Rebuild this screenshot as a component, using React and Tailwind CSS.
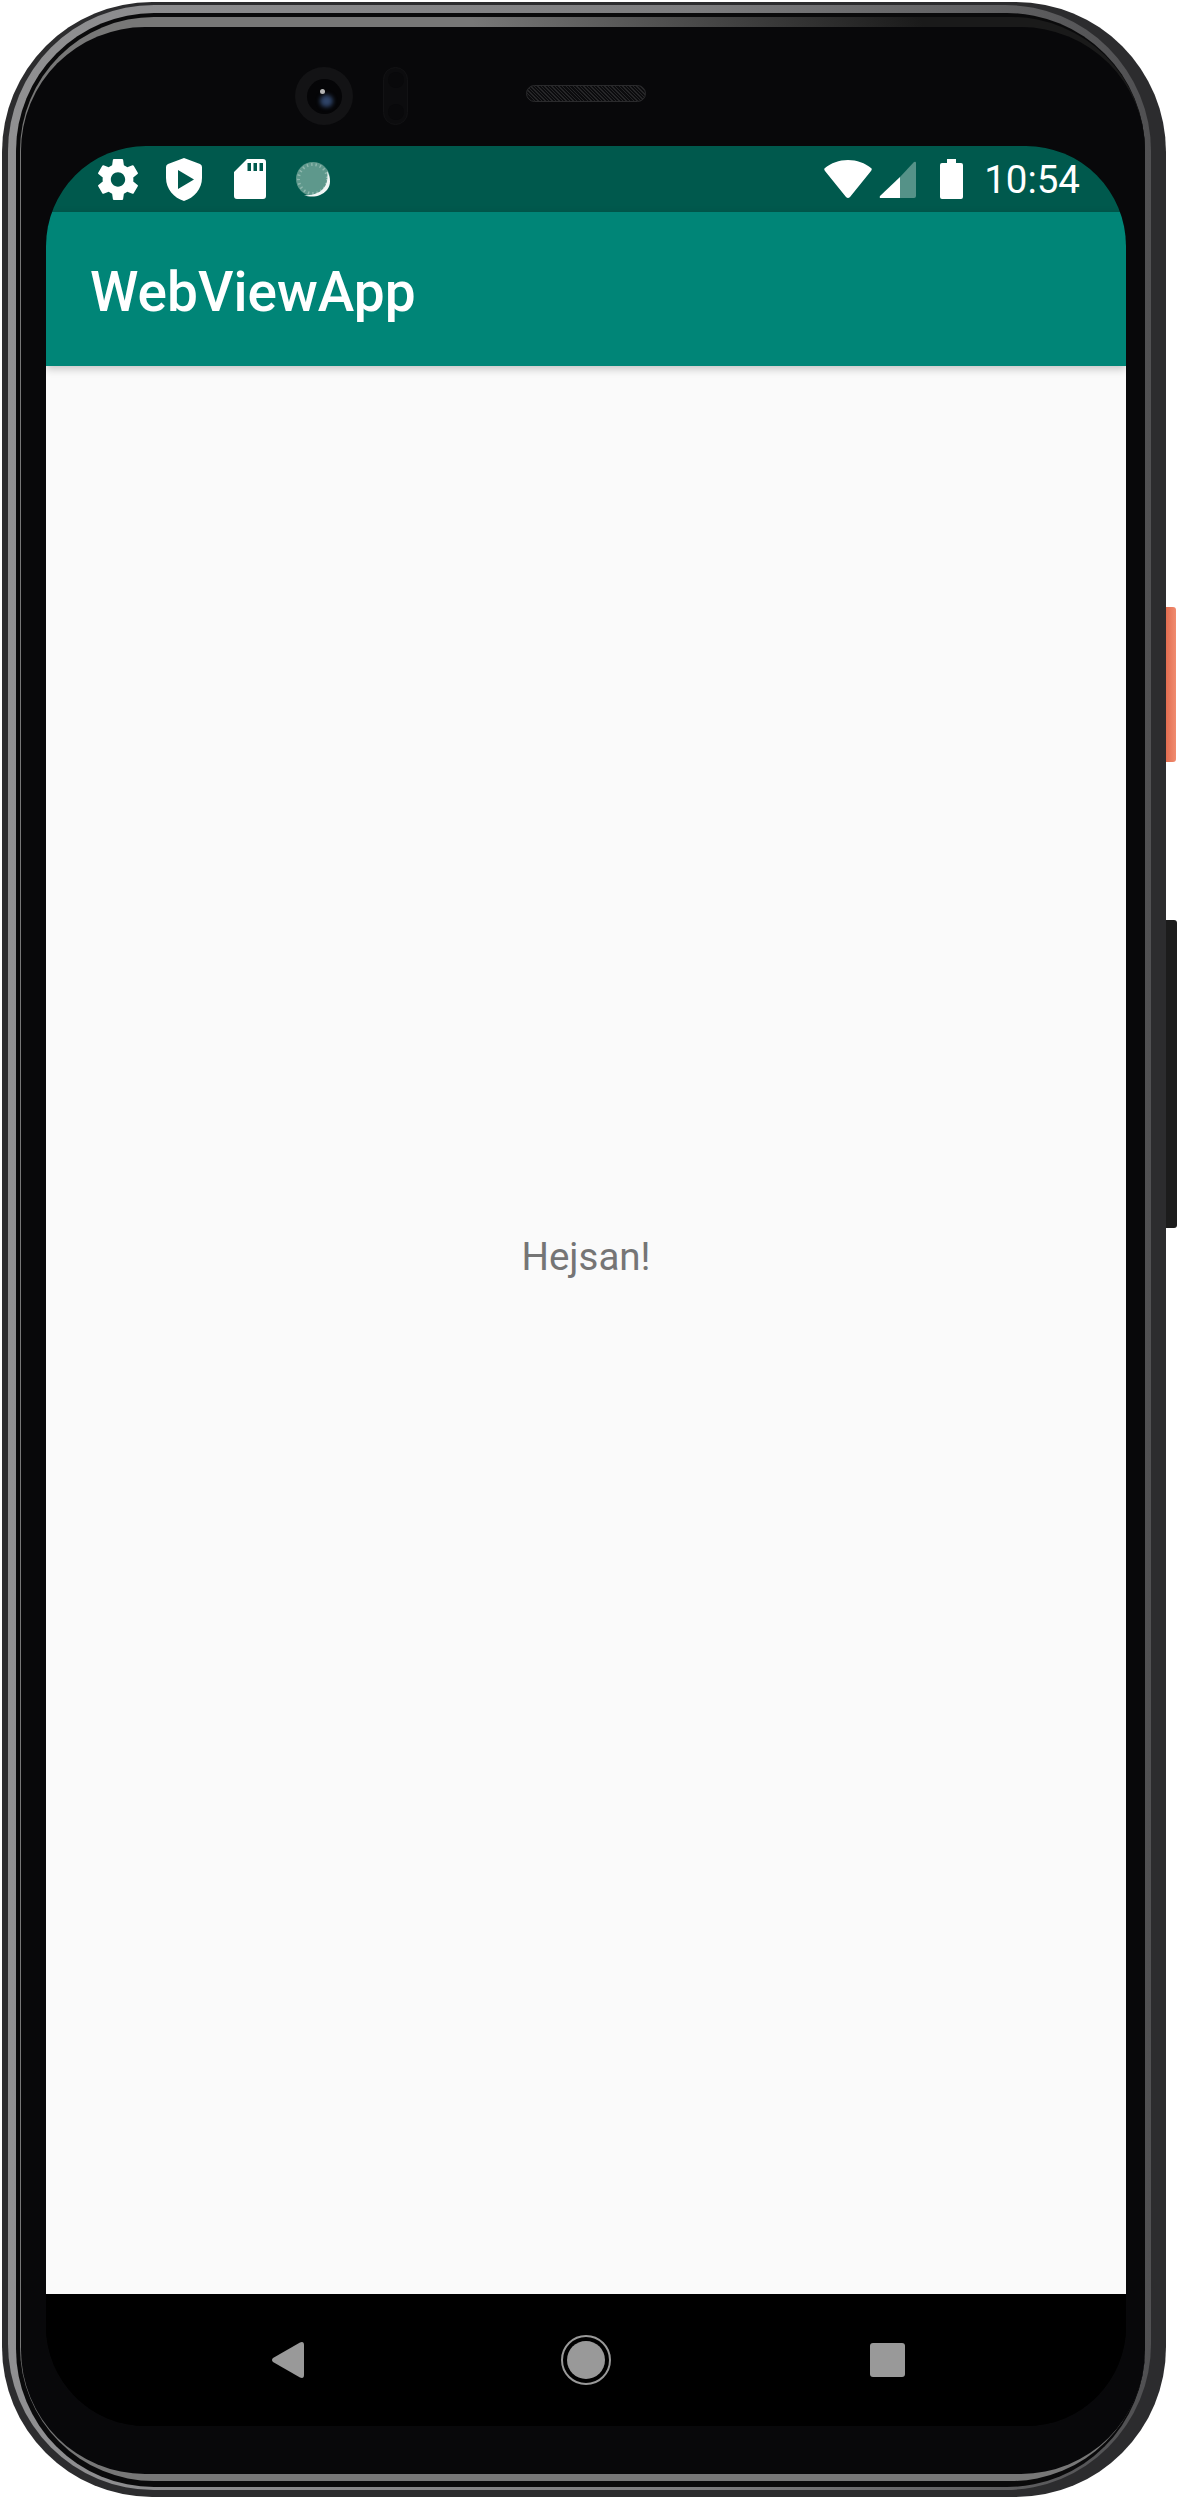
import React from "react";

const Gear = () => (
  <svg viewBox="2.3 2 19.4 20" className="w-[40px] h-[41px] fill-white">
    <path d="M19.43 12.98c.04-.32.07-.64.07-.98s-.03-.66-.07-.98l2.11-1.65c.19-.15.24-.42.12-.64l-2-3.46c-.12-.22-.39-.3-.61-.22l-2.49 1c-.52-.4-1.08-.73-1.69-.98l-.38-2.65C14.46 2.18 14.25 2 14 2h-4c-.25 0-.46.18-.49.42l-.38 2.65c-.61.25-1.17.59-1.69.98l-2.49-1c-.23-.09-.49 0-.61.22l-2 3.46c-.13.22-.07.49.12.64l2.11 1.65c-.04.32-.07.65-.07.98s.03.66.07.98l-2.11 1.65c-.19.15-.24.42-.12.64l2 3.46c.12.22.39.3.61.22l2.49-1c.52.4 1.08.73 1.69.98l.38 2.65c.03.24.24.42.49.42h4c.25 0 .46-.18.49-.42l.38-2.65c.61-.25 1.17-.59 1.69-.98l2.49 1c.23.09.49 0 .61-.22l2-3.46c.12-.22.07-.49-.12-.64l-2.11-1.65zM12 15.5c-1.93 0-3.5-1.57-3.5-3.5s1.57-3.5 3.5-3.5 3.5 1.57 3.5 3.5-1.57 3.5-3.5 3.5z" />
  </svg>
);

const Shield = () => (
  <svg viewBox="0 0 36 43" className="w-[36px] h-[43px] fill-white">
    <path
      fillRule="evenodd"
      d="M18 0 L34 6 Q36 7 36 9 V20 C36 31 28 40 18 43 C8 40 0 31 0 20 V9 Q0 7 2 6 Z M12 12 V31 L28 21.5 Z"
    />
  </svg>
);

const SdCard = () => (
  <svg viewBox="0 0 32 40" className="w-[32px] h-[40px] fill-white">
    <path
      fillRule="evenodd"
      d="M13 0 H29 Q32 0 32 3 V37 Q32 40 29 40 H3 Q0 40 0 37 V13 Z M13.5 4 V12 H17 V4 Z M19.5 4 V12 H23 V4 Z M25.5 4 V12 H29 V4 Z"
    />
  </svg>
);

const Spinner = () => (
  <svg viewBox="0 0 36 38" className="w-[36px] h-[38px]">
    <circle cx="17" cy="19" r="17" fill="#5e988c" />
    <circle cx="17" cy="19" r="14.5" fill="none" stroke="#8fb8ae" strokeWidth="3" strokeDasharray="1.4 3" />
    <path d="M8 35 C15 38 25 37 31 30 C35 25 35 18 31 11 C33 22 29 30 21 33 C17 35 12 35.500 8 35 Z" fill="#f1f6f5" />
  </svg>
);

const Wifi = () => (
  <svg viewBox="0 0 48 38" className="w-[48px] h-[38px] fill-white">
    <path d="M24 0 C33 0 41 3 47 8 Q48.500 9 47 11 L26 37 Q24 39 22 37 L1 11 Q-.5 9 1 8 C7 3 15 0 24 0 Z" />
  </svg>
);

const Signal = () => (
  <svg viewBox="0 0 37 37" className="w-[37px] h-[37px]">
    <path d="M21 16 L35 1 Q37 0 37 2 V35 Q37 37 35 37 H21 Z" fill="#559288" />
    <path d="M21 16 V37 H2 Q0 37 1 35 Z" fill="#fff" />
  </svg>
);

const Battery = () => (
  <svg viewBox="0 0 23 40" className="w-[23px] h-[40px] fill-white">
    <path d="M7 0 H16 V4 H21 Q23 4 23 6 V38 Q23 40 21 40 H2 Q0 40 0 38 V6 Q0 4 2 4 H7 Z" />
  </svg>
);

const Camera = () => (
  <div className="w-[58px] h-[58px] rounded-full bg-[#131315] flex items-center justify-center">
    <div className="relative w-[35px] h-[35px] rounded-full bg-[#050507]">
      <div className="absolute left-[13px] top-[16px] w-[13px] h-[12px] rounded-full bg-[#2f4468] blur-[2px]" />
      <div className="absolute left-[13px] top-[10px] w-[5px] h-[5px] rounded-full bg-[#b5b5b5]" />
    </div>
  </div>
);

const Sensors = () => (
  <div className="w-[25px] h-[58px] rounded-full bg-[#0c0c0e] border border-[#121214] flex flex-col items-center justify-between py-[4px]">
    <div className="w-[16px] h-[16px] rounded-full bg-[#09090b]" />
    <div className="w-[16px] h-[16px] rounded-full bg-[#09090b]" />
  </div>
);

export default function App() {
  return (
    <div className="relative w-[1178px] h-[2498px] bg-white overflow-hidden" style={{ fontFamily: "Roboto, sans-serif" }}>
      <div className="absolute right-[2px] top-[607px] w-[12px] h-[155px] rounded-r-[3px] bg-gradient-to-r from-[#e0674a] to-[#f08c70]" />
      <div className="absolute right-[1px] top-[920px] w-[13px] h-[308px] rounded-r-[3px] bg-[#1c1c1c]" />

      {/* body: rings from the outside in */}
      <div className="relative ml-[2px] mt-[2px] w-[1164px] h-[2495px] rounded-[150px] bg-[#2c2c2e] pl-[6px] pr-[15px] pt-[3px] pb-[7px]">
        <div className="w-full h-full rounded-[146px] bg-[linear-gradient(to_right,#909092_0%,#7c7c7e_60%,#505052_100%)] pl-[8px] pr-[6px] pt-[8px] pb-[3px]">
          <div className="w-full h-full rounded-[138px] bg-[#0a0a0b] pl-[4px] pt-[4px] pb-[6px]">
            <div className="w-full h-full rounded-[134px] bg-[linear-gradient(to_bottom_left,#1a1a1a_10%,#777777_30%)] pl-[1px] pt-[10px] pb-[7px]">
              <div className="w-full h-full rounded-[124px] bg-[#08080a] pl-[25px] pr-[19px] pt-[119px] pb-[48px]">
                <div className="flex flex-col w-[1080px] h-[2280px] rounded-[100px] overflow-hidden bg-black">
                  <div className="h-[66px] bg-[#00594d] flex items-center justify-between pl-[52px] pr-[46px]">
                    <div className="flex items-center">
                      <Gear />
                      <div className="ml-[28px]"><Shield /></div>
                      <div className="ml-[32px]"><SdCard /></div>
                      <div className="ml-[30px]"><Spinner /></div>
                    </div>
                    <div className="flex items-center">
                      <Wifi />
                      <div className="ml-[7px]"><Signal /></div>
                      <div className="ml-[24px]"><Battery /></div>
                      <span className="ml-[21px] pt-[2px] text-[38.5px] leading-[44px] text-white">10:54</span>
                    </div>
                  </div>
                  <div className="relative z-10 h-[154px] bg-[#008577] shadow-[0_3px_8px_rgba(0,0,0,0.22)] flex items-center pl-[44px] pt-[6px]">
                    <h1 className="text-[55px] font-medium leading-none text-white">WebViewApp</h1>
                  </div>
                  <div className="flex-1 bg-[#fafafa] flex items-center justify-center pb-[146px]">
                    <p className="text-[38.5px] text-[#757575]">Hejsan!</p>
                  </div>
                  <div className="h-[132px] bg-black flex items-center">
                    <div className="ml-[226px] w-[32px] h-[36px]">
                      <svg viewBox="0 0 32 36" className="w-[32px] h-[36px] fill-[#999999]">
                        <path d="M1 16 L28 .5 Q32 -1 32 3 V33 Q32 37 28 35.500 L1 20 Q-1 18 1 16 Z" />
                      </svg>
                    </div>
                    <div className="ml-[257px] w-[50px] h-[50px] rounded-full border-[2.5px] border-[#999999] flex items-center justify-center">
                      <div className="w-[38px] h-[38px] rounded-full bg-[#999999]" />
                    </div>
                    <div className="ml-[259px] w-[35px] h-[34px] rounded-[3px] bg-[#999999]" />
                  </div>
                </div>
              </div>
            </div>
          </div>
        </div>

        {/* front camera and earpiece sit in the top bezel */}
        <div className="absolute left-[293px] top-[65px] flex items-center gap-[30px]">
          <Camera />
          <Sensors />
        </div>
        <div className="absolute left-[524px] top-[83px] w-[120px] h-[17px] rounded-full border border-[#2a2a2c] bg-[repeating-linear-gradient(45deg,#262628_0px,#262628_1px,#0c0c0e_1px,#0c0c0e_2.5px)]" />
      </div>
    </div>
  );
}
